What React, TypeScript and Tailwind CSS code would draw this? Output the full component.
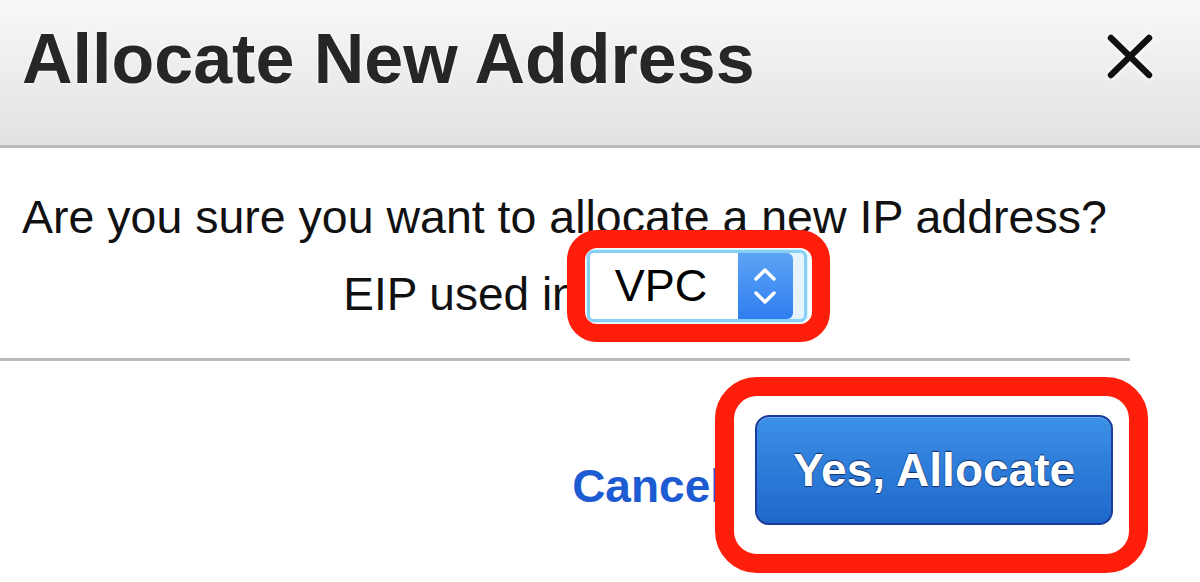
import React from 'react'

const FONT = { fontFamily: '"Liberation Sans", Arial, Helvetica, sans-serif' }

function CloseIcon() {
    return (
        <svg width="48" height="45" viewBox="0 0 48 45" className="[filter:drop-shadow(0_0_2px_#fff)_drop-shadow(0_0_1px_#fff)]">
            <line x1="5" y1="4" x2="43" y2="41" stroke="#111" strokeWidth="6.5" strokeLinecap="round" />
            <line x1="43" y1="4" x2="5" y2="41" stroke="#111" strokeWidth="6.5" strokeLinecap="round" />
        </svg>
    )
}

function UpDown() {
    return (
        <svg width="26" height="46" viewBox="0 0 26 46">
            <polyline points="4,16 13,7 22,16" fill="none" stroke="#fff" strokeWidth="3.5" strokeLinecap="round" strokeLinejoin="round" />
            <polyline points="4,30 13,39 22,30" fill="none" stroke="#fff" strokeWidth="3.5" strokeLinecap="round" strokeLinejoin="round" />
        </svg>
    )
}

function VpcSelect() {
    return (
        <div className="w-[220px] h-[72px] flex border-[3px] border-[#86d0f6] rounded-[7px] bg-[#e6f2fc] pr-[11px] shadow-[0_0_3px_#9bd8f8]">
            <div className="flex-1 bg-white rounded-l-[4px] flex items-center pl-[25px]">
                <span className="text-[45px] leading-[50px] text-black">VPC</span>
            </div>
            <div className="w-[55px] bg-gradient-to-b from-[#5da3f6] to-[#2f7ef0] rounded-r-[6px] flex items-center justify-center">
                <UpDown />
            </div>
        </div>
    )
}

export default function App() {
    return (
        <div className="relative w-[1200px] h-[582px] overflow-hidden bg-white" style={FONT}>
            <div className="h-[148px] flex justify-between items-start pl-[22px] pr-[46px] bg-gradient-to-b from-[#f8f8f8] to-[#e2e2e2] border-b-[3px] border-[#b8b8b8]">
                <h1 className="pt-[24px] text-[70px] leading-[70px] font-bold text-[#262626] [text-shadow:0_0_3px_#fff,0_0_2px_#fff]">
                    Allocate New Address
                </h1>
                <div className="mt-[34px]">
                    <CloseIcon />
                </div>
            </div>

            <div className="w-[1150px]">
                <p className="mt-[44px] pl-[22px] text-[46.5px] leading-[50px] text-[#111] whitespace-nowrap">
                    Are you sure you want to allocate a new IP address?
                </p>
                <div className="mt-[8px] flex justify-center items-start">
                    <span className="mt-[19px] text-[46px] leading-[50px] text-[#111] whitespace-nowrap">EIP used in</span>
                    <div className="ml-[9px]">
                        <VpcSelect />
                    </div>
                </div>
            </div>

            <div className="mt-[36px] w-[1130px] h-[3px] bg-[#b9b9b9]" />

            <div className="mt-[54px] flex justify-end items-start pr-[87px]">
                <span className="mt-[46px] mr-[32px] text-[46px] leading-[50px] font-bold text-[#1d5bd3]">Cancel</span>
                <button className="w-[358px] h-[110px] rounded-[14px] border-2 border-[#1b3c9c] bg-gradient-to-b from-[#3c90e6] to-[#1f68cb] shadow-[inset_0_1px_0_#6fb0f0] text-white text-[46px] font-bold [text-shadow:0_-1px_1px_#13306e,0_1px_1px_#13306e]">
                    Yes, Allocate
                </button>
            </div>

            {/* red annotation rings */}
            <div className="absolute left-[567px] top-[230px] w-[263px] h-[112px] border-[18px] border-[#ff1e0a] rounded-[30px]" />
            <div className="absolute left-[715px] top-[377px] w-[433px] h-[196px] border-[19px] border-[#ff1e0a] rounded-[42px]" />
        </div>
    )
}
